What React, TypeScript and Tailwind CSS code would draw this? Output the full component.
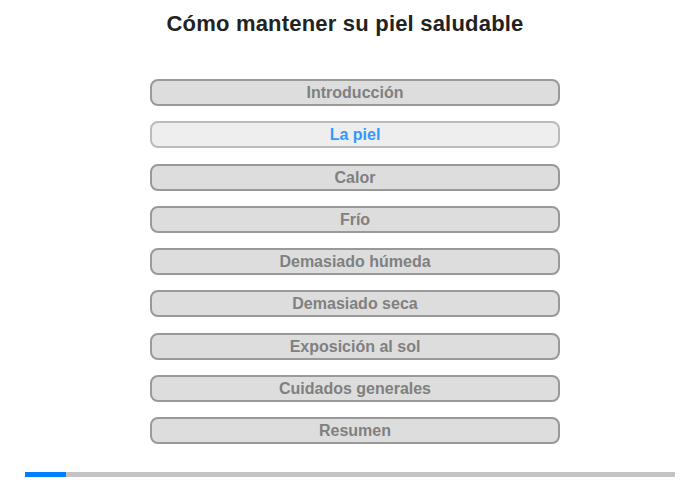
import React from 'react';

const sections = [
  'Introducción',
  'La piel',
  'Calor',
  'Frío',
  'Demasiado húmeda',
  'Demasiado seca',
  'Exposición al sol',
  'Cuidados generales',
  'Resumen',
];

export default function App() {
  const current = 1;

  return (
    <div className="w-[700px] h-[480px] bg-white flex flex-col font-['Liberation_Sans',Arial,sans-serif]">
      {/* Title */}
      <h1 className="pt-[11px] pr-[10px] text-center text-[22px] leading-[26px] tracking-[0.2px] font-bold text-[#222222]">
        Cómo mantener su piel saludable
      </h1>

      {/* Menu */}
      <div className="mt-[42px] ml-[150px] w-[410px] flex flex-col gap-[15.25px]">
        {sections.map((title, i) => (
          <button
            key={title}
            className={
              i === current
                ? 'h-[27px] rounded-[8px] border-2 border-[#bbbbbb] bg-[#eeeeee] text-[16px] leading-[23px] font-bold text-[#3399ff]'
                : 'h-[27px] rounded-[8px] border-2 border-[#999999] bg-[#dddddd] text-[16px] leading-[23px] font-bold text-[#808080]'
            }
          >
            {title}
          </button>
        ))}
      </div>

      {/* Progress */}
      <div className="mt-auto mb-[3px] mx-[25px] h-[5px] bg-[#c4c4c4] flex">
        <div className="w-[41px] bg-[#0080ff]" />
      </div>
    </div>
  );
}
